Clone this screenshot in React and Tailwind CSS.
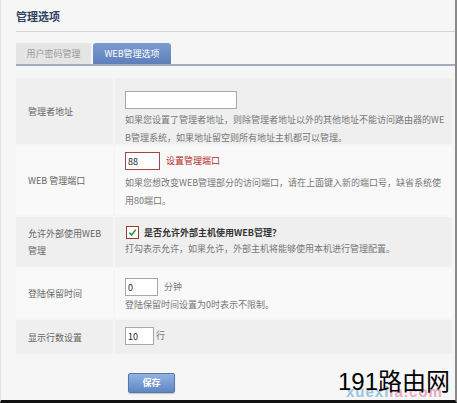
const font = { fontFamily: '"Noto Sans CJK SC", "Noto Sans", sans-serif' };

function Row({ label, shaded, className = "", children }) {
  return (
    <div className={`flex gap-[2px] ${className}`}>
      <div
        className={`w-[97px] shrink-0 flex items-center pl-3 text-[9px] leading-[17px] text-[#666] ${
          shaded ? "bg-[#efefef]" : "bg-[#f9f9f9]"
        }`}
      >
        {label}
      </div>
      <div className={`flex-1 pl-[10px] ${shaded ? "bg-[#efefef]" : "bg-[#f9f9f9]"}`}>
        {children}
      </div>
    </div>
  );
}

function Desc({ children, className = "" }) {
  return (
    <div className={`text-[9px] leading-[18px] text-[#777] whitespace-nowrap ${className}`}>
      {children}
    </div>
  );
}

function Box({ value, w, red }) {
  return (
    <input
      readOnly
      value={value}
      className={`h-[18px] ${w} bg-white px-[2px] text-[9px] text-[#222] outline-none border ${
        red ? "border-[#a04848]" : "border-[#a8a8a8]"
      }`}
    />
  );
}

export default function App() {
  return (
    <div
      className="relative w-[457px] h-[403px] overflow-hidden bg-[#f6f6f6] border-l border-l-[#e4e4e4] border-r-2 border-r-[#8a8a8a] border-b-[3px] border-b-[#111]"
      style={font}
    >
      <div className="pl-[15px] pt-[9px]">
        <div className="text-[11px] leading-[14px] font-bold text-[#2f3f5c]">管理选项</div>
        <div className="mt-[8px] h-px bg-[#d6d6d6]" />

        <div className="mt-[11px] flex gap-[2px] border-b-2 border-[#a2acc0]">
          <div className="w-[75px] h-[21px] flex items-center justify-center bg-[#e5e5e5] text-[9px] text-[#999]">
            用户密码管理
          </div>
          <div className="w-[78px] h-[21px] flex items-center justify-center rounded-t-[3px] bg-gradient-to-b from-[#7c9bd0] to-[#5e80bb] text-[9px] text-white">
            WEB管理选项
          </div>
        </div>

        <div className="mt-[12px] mr-[3px] flex flex-col gap-[2px]">
          <Row label="管理者地址" shaded className="h-[66px]">
            <div className="pt-[6px]">
              <Box value="" w="w-[112px]" />
              <Desc className="mt-[2px]">
                如果您设置了管理者地址，则除管理者地址以外的其他地址不能访问路由器的WE
                <br />
                B管理系统，如果地址留空则所有地址主机都可以管理。
              </Desc>
            </div>
          </Row>

          <Row label="WEB 管理端口" className="h-[69px]">
            <div className="pt-[6px]">
              <div className="flex items-center gap-[6px]">
                <Box value="88" w="w-[35px]" red />
                <span className="text-[9px] text-[#b42a2a]">设置管理端口</span>
              </div>
              <Desc className="mt-[4px] leading-[16px]">
                如果您想改变WEB管理部分的访问端口，请在上面键入新的端口号，缺省系统使
                <br />
                用80端口。
              </Desc>
            </div>
          </Row>

          <Row
            label={
              <span>
                允许外部使用WEB
                <br />
                管理
              </span>
            }
            shaded
            className="h-[50px]"
          >
            <div className="pt-[9px]">
              <div className="flex items-center gap-[5px]">
                <span className="w-[13px] h-[13px] ml-[1px] flex items-center justify-center border border-[#9a3b3b] bg-white">
                  <svg width="9" height="9" viewBox="0 0 10 10">
                    <path d="M1.5 5.2 L4 7.8 L8.6 1.8" fill="none" stroke="#2f9a3a" strokeWidth="1.8" />
                  </svg>
                </span>
                <span className="text-[9px] font-bold text-[#333]">是否允许外部主机使用WEB管理？</span>
              </div>
              <Desc className="leading-[15px]">打勾表示允许，如果允许，外部主机将能够使用本机进行管理配置。</Desc>
            </div>
          </Row>

          <Row label="登陆保留时间" className="h-[49px]">
            <div className="pt-[9px]">
              <div className="flex items-center gap-[6px]">
                <Box value="0" w="w-[33px]" />
                <span className="text-[9px] text-[#777]">分钟</span>
              </div>
              <Desc className="leading-[16px]">登陆保留时间设置为0时表示不限制。</Desc>
            </div>
          </Row>

          <Row label="显示行数设置" shaded className="h-[34px]">
            <div className="pt-[7px] flex items-center gap-[2px]">
              <Box value="10" w="w-[29px]" />
              <span className="text-[9px] text-[#777]">行</span>
            </div>
          </Row>
        </div>

        <div className="mt-[13px] pl-[112px]">
          <button className="w-[47px] h-[20px] rounded-[2px] border border-[#5577aa] bg-gradient-to-b from-[#93b3e2] to-[#5f86c4] text-[9px] font-bold text-white shadow-[0_1px_1px_rgba(0,0,0,0.2)]">
            保存
          </button>
        </div>
      </div>

      <div className="absolute left-[345px] top-[384px] text-[15px] font-bold leading-none tracking-[1px] opacity-70" style={{ fontFamily: '"Liberation Sans", sans-serif' }}>
        <span className="text-[#6fb0d6]">xuexi</span>
        <span className="text-[#e48aa8]">la.com</span>
      </div>
      <div
        className="absolute left-[337px] top-[369px] text-[24px] leading-[26px] text-black"
        style={{ fontFamily: '"Liberation Sans", "Noto Sans CJK SC", sans-serif' }}
      >
        191路由网
      </div>
    </div>
  );
}
